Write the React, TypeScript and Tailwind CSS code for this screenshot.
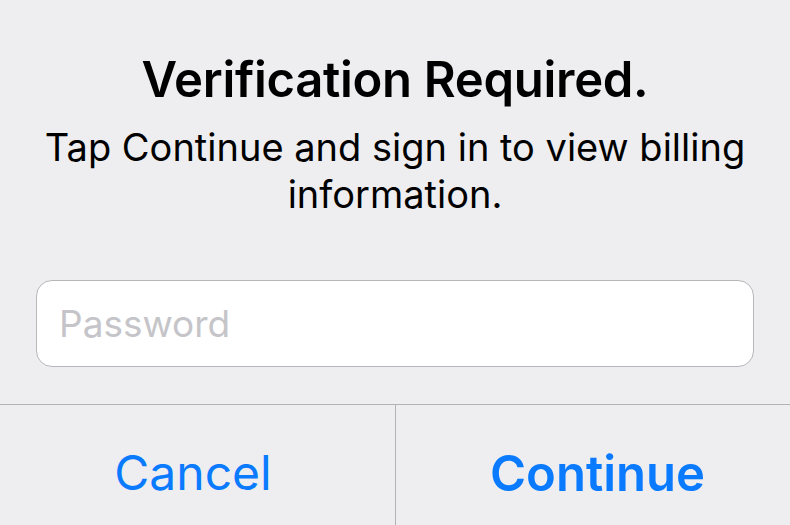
export default function App() {
  return (
    <div className="w-[790px] h-[525px] overflow-hidden bg-[#3a3a40]" style={{ fontFamily: "Inter, 'Liberation Sans', sans-serif" }}>
      <div className="w-[808px] -ml-[9px] -mt-[8px] h-[545px] rounded-[28px] bg-[#eeeef1] flex flex-col">
        <div className="flex flex-col items-center pt-[62px] px-[10px]">
          <h1 className="text-[49px] leading-[52px] font-semibold text-black tracking-[-0.3px]">Verification Required.</h1>
          <p className="mt-[18px] text-[38px] leading-[47px] text-black text-center w-[760px]">
            Tap Continue and sign in to view billing information.
          </p>
        </div>
        <div className="mx-[45px] mt-[62px] h-[87px] rounded-[16px] bg-white border border-[#b7b7bb] flex items-center px-[22px]">
          <span className="text-[37px] text-[#c5c5c9]">Password</span>
        </div>
        <div className="mt-[37px] border-t border-[#b3b3b7] flex h-[130px]">
          <div className="w-[405px] border-r border-[#b3b3b7] flex items-start justify-center pt-[32px]">
            <span className="text-[48px] text-[#0a7aff]">Cancel</span>
          </div>
          <div className="flex-1 flex items-start justify-center pt-[32px]">
            <span className="text-[49px] font-semibold text-[#0a7aff]">Continue</span>
          </div>
        </div>
      </div>
    </div>
  );
}
